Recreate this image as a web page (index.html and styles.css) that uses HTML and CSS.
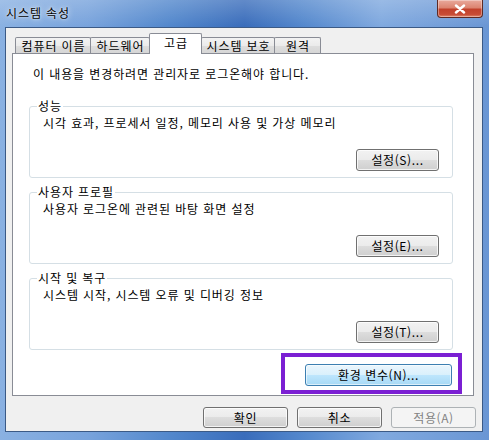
FILE: index.html
```html
<!DOCTYPE html>
<html lang="ko">
<head>
<meta charset="utf-8">
<title>시스템 속성</title>
<link rel="stylesheet" href="styles.css">
</head>
<body>
<div class="window">
  <div class="titlebar">
    <span class="title">시스템 속성</span>
    <button class="close" aria-label="닫기">
      <svg width="12" height="10" viewBox="0 0 12 10"><path d="M2 1.5 L10 8.5 M10 1.5 L2 8.5" stroke="#fff" stroke-width="2.4" stroke-linecap="round"/></svg>
    </button>
  </div>
  <div class="client">
    <div class="tabs">
      <div class="tab t1">컴퓨터 이름</div>
      <div class="tab t2">하드웨어</div>
      <div class="tab t3 active">고급</div>
      <div class="tab t4">시스템 보호</div>
      <div class="tab t5">원격</div>
    </div>
    <div class="panel">
      <p class="notice">이 내용을 변경하려면 관리자로 로그온해야 합니다.</p>
      <fieldset class="group first">
        <legend>성능</legend>
        <p class="desc">시각 효과, 프로세서 일정, 메모리 사용 및 가상 메모리</p>
        <div class="group-actions"><button class="btn set">설정(S)...</button></div>
      </fieldset>
      <fieldset class="group">
        <legend>사용자 프로필</legend>
        <p class="desc">사용자 로그온에 관련된 바탕 화면 설정</p>
        <div class="group-actions"><button class="btn set">설정(E)...</button></div>
      </fieldset>
      <fieldset class="group">
        <legend>시작 및 복구</legend>
        <p class="desc">시스템 시작, 시스템 오류 및 디버깅 정보</p>
        <div class="group-actions"><button class="btn set">설정(T)...</button></div>
      </fieldset>
      <div class="env-row">
        <div class="highlight"><button class="btn env">환경 변수(N)...</button></div>
      </div>
    </div>
    <div class="footer">
      <button class="btn foot">확인</button>
      <button class="btn foot">취소</button>
      <button class="btn foot disabled" disabled>적용(A)</button>
    </div>
  </div>
</div>
</body>
</html>
```
FILE: styles.css
```css
* { box-sizing: border-box; }
html, body { margin: 0; padding: 0; }
body {
  font-family: "Noto Sans CJK KR", "Noto Sans", sans-serif;
  font-size: 12px;
  letter-spacing: 0.9px;
  color: #000;
  background: #fff;
}
.window {
  width: 489px;
  height: 440px;
  overflow: hidden;
  background:
    linear-gradient(180deg, rgba(255,255,255,0.2) 0px, rgba(255,255,255,0) 26px),
    linear-gradient(90deg, #8ab1e2 0%, #78a3dc 18%, #5287cc 35%, #3a6dbb 50%, #5488cd 62%, #80a9df 78%, #6a96d4 100%);
}
.titlebar {
  height: 27px;
  display: flex;
  justify-content: space-between;
  align-items: flex-start;
  padding-left: 6px;
}
.title {
  margin-top: 5px;
  font-size: 12px;
  line-height: 16px;
  color: #000;
  text-shadow: 0 0 6px rgba(255,255,255,0.9), 0 0 2px rgba(255,255,255,0.8);
}
.close {
  width: 46px;
  height: 18px;
  margin-right: 6px;
  padding: 0;
  border: 1px solid #5e2a24;
  border-top: 0;
  border-radius: 0 0 4px 4px;
  background: linear-gradient(180deg, #e9a99c 0%, #dc8470 45%, #c2412b 55%, #c84c35 85%, #e08a6f 100%);
  box-shadow: inset 0 0 0 1px rgba(255,255,255,0.35);
  display: flex;
  align-items: center;
  justify-content: center;
}
.client {
  margin-left: 5px;
  width: 478px;
  height: 405px;
  border: 1px solid #3b5a86;
  background: #f0f0f0;
  padding: 5px 0 0 6px;
}
.tabs {
  display: flex;
  align-items: flex-end;
  height: 20px;
  margin-left: 3px;
  position: relative;
  z-index: 1;
}
.tab {
  height: 16px;
  line-height: 15px;
  text-align: center;
  border: 1px solid #898c95;
  border-bottom: 0;
  background: linear-gradient(180deg, #f3f3f3 0%, #ebebeb 50%, #dedede 50%, #d6d6d6 100%);
  border-radius: 2px 2px 0 0;
  white-space: nowrap;
  margin-left: -1px;
  padding-left: 1px;
}
.t1 { width: 76px; margin-left: 0; }
.t2 { width: 60px; }
.t3 { width: 53px; }
.t4 { width: 74px; }
.t5 { width: 47px; }
.tab.active {
  height: 21px;
  margin-bottom: -1px;
  background: #fff;
  line-height: 17px;
  position: relative;
  z-index: 2;
}
.panel {
  width: 462px;
  height: 343px;
  border: 1px solid #898c95;
  background: #fff;
}
.notice {
  margin: 12px 0 0 20px;
  line-height: 16px;
}
.group {
  margin: 7px 0 0 16px;
  width: 424px;
  padding: 0 13px 6px 13px;
  border: 1px solid #d5dfe5;
  border-radius: 3px;
  min-inline-size: 0;
}
.group.first { margin-top: 17px; }
.group legend {
  margin-left: -6px;
  padding: 0 1px;
  line-height: 14px;
  font-size: 12px;
}
.desc {
  margin: 2px 0 0 0;
  line-height: 16px;
}
.group-actions {
  display: flex;
  justify-content: flex-end;
  margin-top: 18px;
}
.btn {
  font-family: inherit;
  font-size: 12px;
  letter-spacing: 0.6px;
  color: #000;
  height: 22px;
  padding: 0;
  border: 1px solid #707070;
  border-radius: 3px;
  background: linear-gradient(180deg, #f2f2f2 0%, #ebebeb 50%, #dddddd 50%, #cfcfcf 100%);
  box-shadow: inset 0 0 0 1px rgba(255,255,255,0.75);
  line-height: 18px;
}
.set { width: 83px; }
.env-row {
  display: flex;
  justify-content: flex-end;
  margin-top: 3px;
  padding-right: 11px;
}
.highlight {
  border: 4px solid #7b1fd3;
  width: 181px;
  height: 41px;
  padding: 7px 6px 0 20px;
}
.env {
  width: 147px;
  border-color: #3c7fb1;
  background: linear-gradient(180deg, #eaf6fd 0%, #d9f0fc 50%, #bee6fd 50%, #a7d9f5 100%);
  box-shadow: inset 0 0 0 1px rgba(255,255,255,0.6);
}
.footer {
  display: flex;
  justify-content: flex-end;
  gap: 9px;
  margin-top: 11px;
  padding-right: 6px;
}
.foot { width: 85px; height: 21px; line-height: 17px; }
.foot.disabled {
  border-color: #adb2b5;
  background: #f4f4f4;
  color: #838383;
  box-shadow: none;
}
```
